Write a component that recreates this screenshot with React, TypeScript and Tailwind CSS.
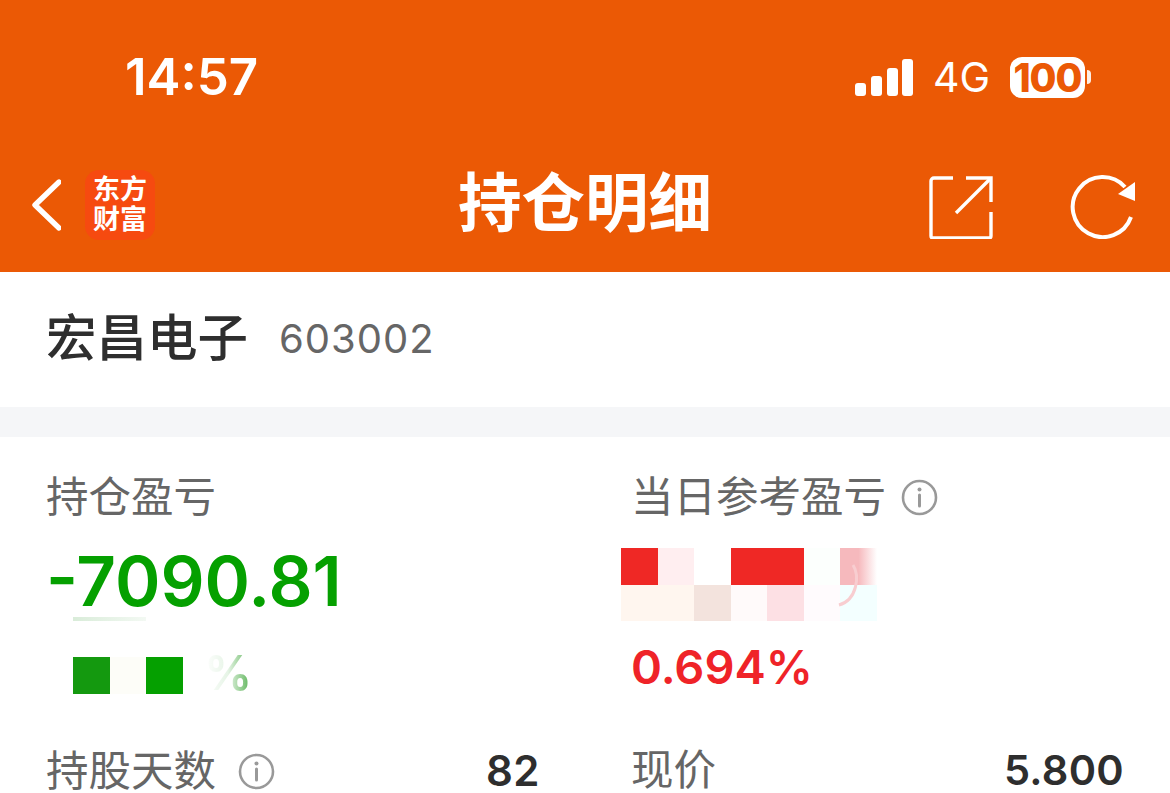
const FONT = "font-['Inter','Noto_Sans_CJK_SC',sans-serif]";

function InfoIcon() {
  return (
    <svg width="37" height="37" viewBox="0 0 37 37" fill="none" className="shrink-0">
      <circle cx="18.5" cy="18.5" r="16.5" stroke="#999999" strokeWidth="2.6" />
      <circle cx="18.5" cy="10.5" r="2" fill="#999999" />
      <path d="M18.5 16v11" stroke="#999999" strokeWidth="3" strokeLinecap="round" />
    </svg>
  );
}

function StatusBar() {
  return (
    <div className="flex h-[140px] items-start justify-between pt-[47px] pl-[125px] pr-[79px] text-white">
      <span className="text-[51px] leading-[60px] font-semibold">14:57</span>
      <div className="flex items-center gap-[20px] pt-[8px]">
        <svg width="58" height="38" viewBox="0 0 58 38" fill="white">
          <rect x="0" y="25" width="11" height="13" rx="3" />
          <rect x="16" y="18" width="11" height="20" rx="3" />
          <rect x="32" y="10" width="11" height="28" rx="3" />
          <rect x="47" y="1" width="11" height="37" rx="3" />
        </svg>
        <span className="text-[41px] leading-[44px] font-normal">4G</span>
        <div className="flex items-center gap-[2px]">
          <div className="flex h-[41px] w-[75px] items-center justify-center rounded-[12px] bg-white text-[39px] leading-[41px] font-extrabold tracking-[-1px] text-[#eb5905]">
            100
          </div>
          <div className="h-[14px] w-[4px] rounded-r-full bg-white/90" />
        </div>
      </div>
    </div>
  );
}

function NavBar() {
  return (
    <div className="relative flex h-[132px] items-start pt-[30px] pl-[31px] pr-[34px] text-white">
      <svg width="30" height="52" viewBox="0 0 30 52" fill="none" className="mt-[9px]">
        <path d="M28 3L4 26l24 23" stroke="white" strokeWidth="5.4" strokeLinecap="round" strokeLinejoin="round" />
      </svg>
      <div className="ml-[24px] flex h-[70px] w-[70px] flex-col items-center justify-center rounded-[14px] bg-[#f64a10] text-[27px] leading-[30px] font-bold">
        <span>东方</span>
        <span>财富</span>
      </div>
      <div className="absolute top-[27px] left-0 w-full text-center text-[63.5px] leading-[72px] font-bold">
        持仓明细
      </div>
      <div className="ml-auto flex items-start gap-[77px] pt-[5px]">
        <svg width="64" height="64" viewBox="0 0 64 64" fill="none">
          <path d="M24 3H5a3 3 0 0 0-3 3v55a2 2 0 0 0 2 2h56a2 2 0 0 0 2-2V37" stroke="white" strokeWidth="3.4" />
          <path d="M37 3h25v24" stroke="white" strokeWidth="3.4" />
          <path d="M61 4L27 38" stroke="white" strokeWidth="3.4" />
        </svg>
        <svg width="66" height="64" viewBox="0 0 66 64" fill="none">
          <path d="M61 42A30 30 0 1 1 55 12" stroke="white" strokeWidth="4" />
          <path d="M65 7v19L48 19z" fill="white" />
        </svg>
      </div>
    </div>
  );
}

function Mosaic({ colors, cols }: { colors: string[]; cols: string }) {
  return (
    <div className={`grid ${cols} w-fit`}>
      {colors.map((color, i) => (
        <div key={i} className="h-[36.5px] w-[36.5px]" style={{ background: color }} />
      ))}
    </div>
  );
}

export default function App() {
  return (
    <div className={`h-[793px] w-[1170px] overflow-hidden bg-white ${FONT}`}>
      <div className="bg-[#eb5905]">
        <StatusBar />
        <NavBar />
      </div>

      <div className="box-content flex h-[135px] items-center gap-[31px] border-b-[30px] border-[#f5f6f8] pl-[46px]">
        <span className="-mt-[3px] text-[50.5px] leading-[60px] font-medium text-[#2e2e2e]">宏昌电子</span>
        <span className="-mt-[2px] text-[40px] leading-[48px] tracking-[1px] text-[#666666]">603002</span>
      </div>

      <div className="grid grid-cols-[585px_585px] pt-[32px]">
        <div className="pl-[46px] pr-[45px]">
          <div className="text-[42.5px] leading-[56px] text-[#666666]">持仓盈亏</div>
          <div className="mt-[20px] h-[72px] text-[69px] leading-[72px] font-semibold text-[#05a000]">-7090.81</div>
          <div className="ml-[27px] h-[4px] w-[73px] bg-gradient-to-r from-[#d9ecd9] to-[#f3f9f3]" />
          <div className="relative mt-[36px] ml-[27px] h-[37px]">
            <Mosaic cols="grid-cols-3" colors={["#14990f", "#fdfdf8", "#05a000"]} />
            <span className="absolute top-[-13px] left-[131px] bg-gradient-to-r from-white via-[#e6f4e6] to-[#4faf4d] bg-clip-text text-[48px] leading-[58px] font-semibold text-transparent">
              %
            </span>
          </div>
          <div className="mt-[55px] flex items-center justify-between">
            <div className="flex items-center gap-[22px]">
              <span className="text-[42.5px] leading-[44px] text-[#666666]">持股天数</span>
              <InfoIcon />
            </div>
            <span className="text-[42px] leading-[44px] font-semibold tracking-[0.5px] text-[#2e2e2e]">82</span>
          </div>
        </div>

        <div className="pl-[46px] pr-[46px]">
          <div className="flex items-center gap-[15px]">
            <span className="text-[42.5px] leading-[56px] text-[#666666]">当日参考盈亏</span>
            <InfoIcon />
          </div>
          <div className="relative mt-[23px] -ml-[10px] w-fit">
            <Mosaic
              cols="grid-cols-7"
              colors={[
                "#ef2825", "#ffeef0", "#ffffff", "#ef2825", "#ef2825", "#fcfffd", "linear-gradient(to right, #f6b9bd 50%, #ffffff)",
                "#fff6ef", "#fff6ef", "#f3e3dd", "#fffafa", "#fde0e4", "#fffbfd", "#f3ffff",
              ]}
            />
            <svg width="30" height="52" viewBox="0 0 30 52" fill="none" className="absolute top-[14px] left-[214px]">
              <path d="M18 3C25 14 22 38 4 43" stroke="#f8cdd0" strokeWidth="3" />
            </svg>
          </div>
          <div className="mt-[20px] h-[52px] text-[47px] leading-[52px] font-semibold text-[#ef2328]">0.694%</div>
          <div className="mt-[55px] flex items-center justify-between">
            <span className="text-[42.5px] leading-[44px] text-[#666666]">现价</span>
            <span className="text-[41.5px] leading-[44px] font-semibold tracking-[0.3px] text-[#2e2e2e]">5.800</span>
          </div>
        </div>
      </div>
    </div>
  );
}
